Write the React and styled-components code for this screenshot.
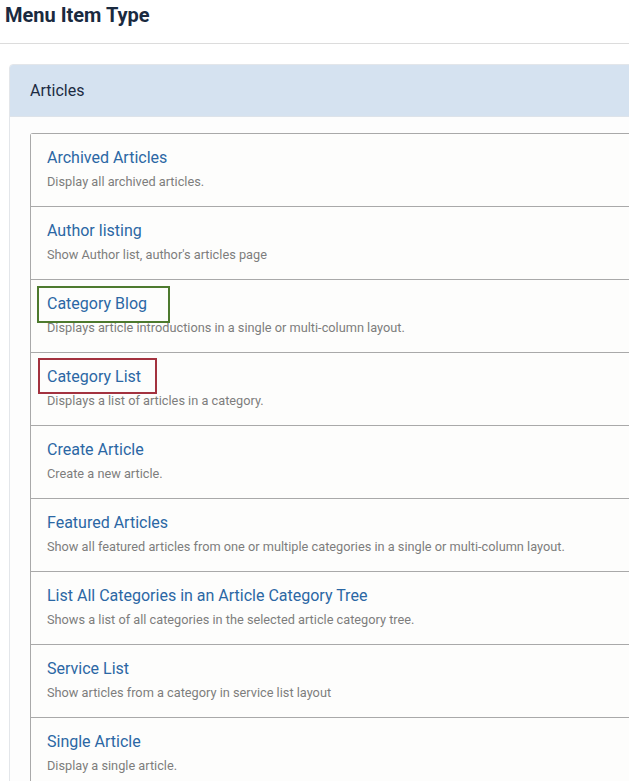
import React from 'react';
import styled, { createGlobalStyle } from 'styled-components';

const items = [
  { title: 'Archived Articles', desc: 'Display all archived articles.' },
  { title: 'Author listing', desc: "Show Author list, author's articles page" },
  {
    title: 'Category Blog',
    desc: 'Displays article introductions in a single or multi-column layout.',
    mark: { color: '#4d7a2e', top: -6, bottom: -7, left: -10, right: -23 }
  },
  {
    title: 'Category List',
    desc: 'Displays a list of articles in a category.',
    mark: { color: '#a3323f', top: -7, bottom: -5, left: -9, right: -16 }
  },
  { title: 'Create Article', desc: 'Create a new article.' },
  {
    title: 'Featured Articles',
    desc: 'Show all featured articles from one or multiple categories in a single or multi-column layout.'
  },
  {
    title: 'List All Categories in an Article Category Tree',
    desc: 'Shows a list of all categories in the selected article category tree.'
  },
  { title: 'Service List', desc: 'Show articles from a category in service list layout' },
  { title: 'Single Article', desc: 'Display a single article.' }
];

const App = () => (
  <>
    <GlobalStyle />
    <Page>
      <Heading>Menu Item Type</Heading>
      <Panel>
        <PanelHeader>Articles</PanelHeader>
        <PanelBody>
          <List>
            {items.map(item => (
              <Row key={item.title}>
                <Title>
                  {item.title}
                  {item.mark && <Mark {...item.mark} />}
                </Title>
                <Desc>{item.desc}</Desc>
              </Row>
            ))}
          </List>
        </PanelBody>
      </Panel>
    </Page>
  </>
);

const GlobalStyle = createGlobalStyle`
  body {
    margin: 0;
    background: #fff;
    font-family: Roboto, "Liberation Sans", sans-serif;
    overflow: hidden;
  }
`;

const Page = styled.div`
  width: 680px;
`;

const Heading = styled.h1`
  margin: 0;
  padding: 3px 5px 0;
  height: 44px;
  box-sizing: border-box;
  font-size: 20px;
  line-height: 24px;
  font-weight: 700;
  color: #1a2a40;
  border-bottom: 1px solid #dcdcdc;
`;

const Panel = styled.div`
  margin: 20px 0 0 9px;
  border: 1px solid #e3e6ea;
  border-radius: 4px;
  background: #fdfdfd;
  overflow: hidden;
`;

const PanelHeader = styled.div`
  height: 51px;
  padding: 0 20px;
  display: flex;
  align-items: center;
  background: #d5e2f0;
  border-bottom: 1px solid #dde3ea;
  font-size: 16px;
  color: #1c2b42;
`;

const PanelBody = styled.div`
  padding: 16px 0 0 20px;
`;

const List = styled.div`
  border: 1px solid #a9a9a9;
  border-bottom: none;
  border-radius: 3px 0 0 0;
`;

const Row = styled.div`
  padding: 12px 16px 14px;
  border-bottom: 1px solid #a9a9a9;
  background: #fdfdfc;
`;

const Title = styled.div`
  position: relative;
  display: inline-block;
  font-size: 16px;
  line-height: 24px;
  color: #2b67a4;
`;

const Mark = styled.span`
  position: absolute;
  top: ${p => p.top}px;
  bottom: ${p => p.bottom}px;
  left: ${p => p.left}px;
  right: ${p => p.right}px;
  border: 2px solid ${p => p.color};
  pointer-events: none;
`;

const Desc = styled.div`
  margin-top: 2px;
  font-size: 12.75px;
  line-height: 20px;
  color: #7d7d7d;
`;

export default App;
